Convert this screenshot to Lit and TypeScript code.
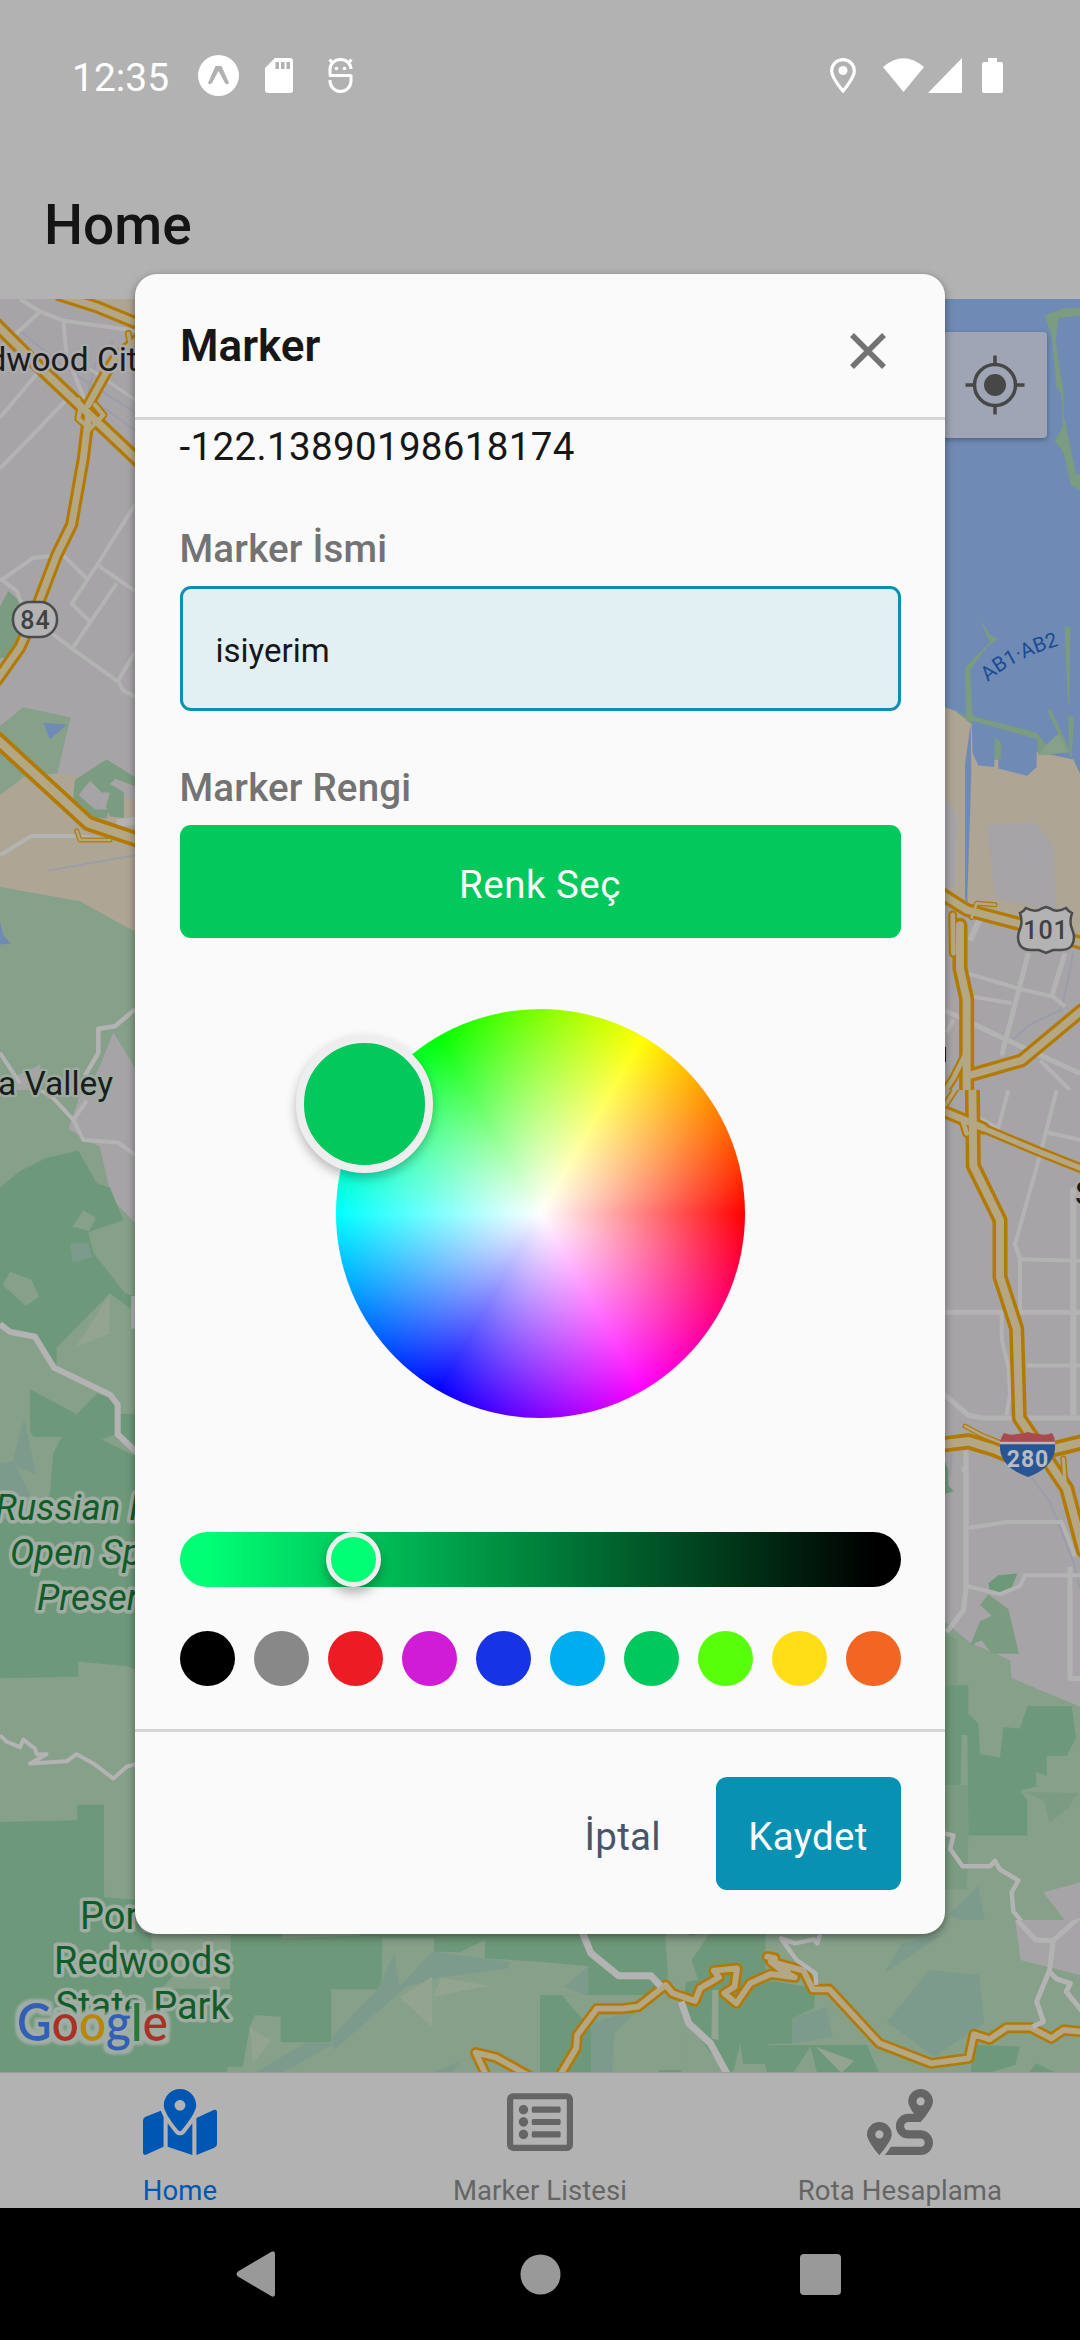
import { LitElement, html, svg, css } from "lit";
import { customElement } from "lit/decorators.js";

/* Map palette, as seen through the modal scrim. */
const C = {
  land: "#a7a4a7", park: "#86a08a", forest: "#6e987a", wood: "#7b9c80",
  sand: "#aea594", water: "#6f8bb5", teal: "#7c9b8c", pale: "#93a48f",
};

type Shape = [fill: string, points: string];
type Line = [points: string, width: number];

interface Tile {
  x: number; y: number; w: number; h: number;
  vw: number; vh: number; vy?: number;
  base: string;
  shapes: Shape[];
  creeks?: string[];
  under?: Line[];
  highways: Line[];
  over?: Line[];
}

const TILES: Tile[] = [
  {
    x: 0, y: 290, w: 140, h: 800, vw: 420, vh: 1568, base: C.land,
    shapes: [
      [C.sand, "250,18 420,18 420,75 330,35"],
      [C.wood, "0,620 25,590 60,610 70,660 30,720 0,722"],
      [C.sand, "0,985 70,955 170,945 240,955 400,1000 420,1005 420,1268 370,1250 240,1200 0,1170"],
      [C.park, "0,855 70,818 212,838 172,947 70,955 0,990"],
      [C.water, "130,848 200,852 150,881"],
      [C.land, "240,950 330,925 330,1032 290,1040 240,1010"],
      [C.wood, "225,960 320,920 405,955 405,972 345,958 330,968 372,985 372,1035 330,1032 318,1012 330,985 305,985 285,1018 326,1018 320,1036 270,1034 240,1018 220,995"],
      [C.land, "236,990 270,962 305,985 285,1018"],
      [C.park, "0,1170 240,1198 370,1245 420,1262 420,1568 0,1568"],
      [C.land, "340,1455 410,1530 420,1540 420,1568 265,1568 300,1520"],
      [C.land, "50,1540 122,1518 110,1568 40,1568"],
      [C.water, "0,1238 10,1265 32,1281 0,1283"],
    ],
    creeks: ["265,200 285,145 340,100", "60,80 190,150 405,240", "300,225 405,275", "145,1138 405,1108"],
    under: [
      ["0,115 120,42 60,18", 4], ["120,42 190,60 405,80", 4], ["190,60 200,130 270,240", 4],
      ["0,250 110,165", 4], ["0,350 200,215", 4], ["270,155 405,215", 3],
      ["0,570 100,525 190,520 260,565", 4], ["405,420 295,535 215,615 270,650", 4],
      ["295,540 405,590", 4], ["350,575 220,700", 4], ["0,565 50,590 65,615", 4],
      ["150,670 220,705 355,768 370,785 405,797", 4], ["355,765 405,710", 4],
      ["0,1108 95,1070 230,1070 330,1078", 4], ["350,1045 405,1040", 8],
      ["405,1410 345,1443 295,1448 295,1495 255,1540", 4.5], ["0,1495 60,1555", 4],
    ],
    highways: [
      ["180,10 290,33 410,65", 13], ["265,225 320,160 350,130 410,98", 12], ["385,85 395,120", 7],
      ["235,215 240,235 235,252 270,272 310,245 285,225", 8],
      ["-10,68 100,140 265,242 415,335", 14],
      ["265,250 250,330 215,460 170,520 100,640 60,700 -10,765", 13],
      ["230,1060 240,1078 330,1078", 5], ["-10,880 265,1045 410,1077", 16],
    ],
  },
  {
    x: 0, y: 1090, w: 140, h: 790, vw: 420, vh: 1457, base: C.park,
    shapes: [
      [C.land, "420,0 245,0 205,72 300,105 335,200 405,245 420,250"],
      [C.forest, "0,180 60,150 140,125 235,112 290,172 330,180 370,240 265,262 280,300 375,375 405,380 405,410 330,375 170,475 170,510 160,505 105,450 30,440 0,430"],
      [C.park, "218,252 250,222 288,235 268,260"],
      [C.teal, "210,283 265,283 277,308 218,318"],
      [C.park, "8,360 30,335 95,350 117,382 78,398"],
      [C.pale, "228,474 330,375 328,450"],
      [C.teal, "72,605 108,708 35,692"],
      [C.teal, "0,690 40,685 90,745 0,800"],
      [C.forest, "90,552 230,598 290,560 350,570 360,597 405,597 420,600 420,1072 380,1063 235,1054 235,1082 0,1085 0,790 90,800 150,745 160,670 185,640 100,640 90,630"],
      [C.park, "305,645 345,635 400,665 405,675"],
      [C.forest, "0,1350 232,1347 232,1318 312,1318 312,1568 0,1568"],
    ],
    under: [
      ["0,432 30,446 105,455 162,512 330,562 353,580 353,635 410,668", 6],
      ["110,-5 160,15 220,55 250,92 355,97 410,122", 4], ["220,55 260,20", 4], ["400,380 400,440", 4],
      ["0,1190 20,1202 60,1212 70,1198 105,1215 110,1225 140,1225 90,1242 200,1238 230,1225 280,1242 340,1270 380,1248 410,1243", 4],
    ],
    highways: [],
  },
  {
    x: 940, y: 290, w: 140, h: 800, vw: 420, vh: 1568, base: C.land,
    shapes: [
      [C.sand, "0,815 420,815 420,1290 235,1240 0,1190"],
      [C.water, "0,0 420,0 420,948 400,920 290,905 290,935 262,952 175,938 175,920 163,920 163,935 115,932 98,908 95,850 48,825 15,818 0,818"],
      [C.water, "92,850 75,930 75,1190 85,1235 82,1190 94,950"],
      [C.wood, "315,50 370,36 420,35 420,50 355,55 347,100 370,200 370,240 408,362 420,360 420,392 392,382 372,320 345,295 368,268 365,205 350,190 335,90"],
      [C.wood, "117,643 150,675 172,685 140,700 90,745 98,835 215,855 290,868 318,892 355,870 322,825 332,822 388,898 385,835 402,838 395,918 385,906 295,912 290,880 100,845 92,850 48,826 78,835 75,740 150,690"],
      [C.park, "318,892 355,870 385,906 295,912"],
      [C.wood, "374,660 391,660 388,810 384,810"],
      [C.wood, "165,875 185,890 182,920 163,920"],
      [C.land, "0,995 20,1000 55,1030 45,1170 0,1175"],
      [C.land, "140,1050 285,1042 340,1090 350,1220 165,1190"],
    ],
    creeks: ["400,1300 365,1410 270,1440 210,1475"],
    under: [
      ["85,1340 240,1370 340,1385 375,1405", 4], ["265,1300 185,1500", 5], ["375,1300 335,1385", 5],
      ["15,1412 200,1470 420,1535", 5], ["95,1385 215,1398", 4], ["20,1455 40,1430", 4],
      ["125,1225 90,1275", 6], ["300,1510 390,1568", 4],
    ],
    highways: [
      ["95,1230 110,1202 165,1205", 5], ["38,1225 40,1300", 9],
      ["-5,1180 80,1215 235,1242 425,1280", 14],
      ["-5,1590 40,1545 75,1500", 9],
      ["60,1245 60,1330 80,1390 80,1580", 15], ["95,1538 245,1510 425,1412", 14],
    ],
  },
  {
    x: 940, y: 1090, w: 140, h: 850, vw: 420, vh: 1568, base: C.land,
    shapes: [
      [C.park, "0,975 15,980 90,1020 210,1050 215,1085 410,1135 420,1138 420,1568 0,1568"],
      [C.forest, "0,1098 85,1098 85,1150 115,1168 120,1225 180,1232 190,1175 240,1178 262,1137 395,1137 408,1195 380,1228 320,1228 320,1265 287,1258 290,1285 240,1292 262,1310 262,1375 85,1375 82,1190 65,1190 62,1282 0,1282"],
      [C.land, "90,1018 130,930 215,1040 210,1052"],
      [C.wood, "145,930 205,958 237,1040 155,1040 125,1015 90,1025 120,980 155,970 120,950"],
      [C.wood, "0,1282 85,1282 85,1375 80,1475 0,1475"],
      [C.wood, "0,1005 52,1012 52,1098 0,1098"],
      [C.wood, "250,1295 412,1297 385,1325 328,1352 312,1310"],
      [C.forest, "145,910 175,895 232,892 215,918 180,930 150,925"],
      [C.forest, "0,685 15,685 25,700 25,730 42,740 15,745"],
      [C.teal, "28,1520 115,1468 145,1568"],
      [C.land, "310,1480 420,1462 420,1540 380,1536"],
    ],
    creeks: ["275,715 330,760 400,870 420,920", "35,670 30,710"],
    under: [
      ["205,0 175,70 110,50", 4], ["350,0 300,120 225,285 240,310 240,410", 4], ["240,312 420,315", 4],
      ["0,410 420,410", 5], ["320,78 420,92", 4], ["400,180 400,600", 6], ["260,508 420,508", 4],
      ["0,555 85,600 130,605 420,605", 5], ["185,415 185,460 205,510 210,560 200,600", 4],
      ["78,665 78,920 70,960 20,1000", 5], ["65,700 78,700 78,800", 5],
      ["85,808 200,797 365,797 405,860", 4], ["80,915 180,930 240,915 255,895 420,895", 4],
      ["390,880 390,1085 420,1086", 5],
      ["0,1370 40,1375 30,1400 68,1432 150,1432 165,1422 180,1438 235,1458 215,1480 220,1515 290,1568 350,1568 420,1530", 4.5],
    ],
    highways: [
      ["75,620 130,638 180,650", 5], ["370,680 375,720", 6],
      ["-5,35 130,70", 13], ["120,68 290,112 425,145", 10], ["15,28 45,0", 7], ["70,60 80,80", 9],
      ["-5,655 85,648 160,662 200,672", 16], ["330,664 425,650", 16],
      ["97,-10 100,140 180,240 180,345 230,440 238,605 380,735 430,850", 15],
    ],
  },
  {
    x: 0, y: 1880, w: 540, h: 193, vw: 1568, vh: 579, base: C.forest,
    shapes: [
      [C.park, "302,0 400,0 400,60 302,52"],
      [C.park, "440,160 670,165 668,328 470,325 500,290 440,200"],
      [C.park, "815,150 1045,150 1045,167 820,175"],
      [C.park, "1110,175 1260,175 1260,215 1335,217 1408,180 1408,235 1568,245 1568,579 660,579 660,560 705,560 725,440 740,405 815,410 815,487 962,487 962,328 1108,328"],
      [C.teal, "1145,220 1160,320 1255,215 1480,245 1475,265 1290,290 1180,320 970,510 962,470 1095,330"],
      [C.teal, "885,490 970,490 820,579 740,579"],
      [C.pale, "1160,352 1255,290 1255,440"],
      [C.pale, "1280,292 1420,317 1260,350"],
      [C.pale, "725,440 788,483 735,548"],
      [C.teal, "1265,575 1340,540 1310,579"],
    ],
    highways: [["1416,595 1381,518 1440,532 1540,590", 11]],
  },
  {
    x: 540, y: 1920, w: 540, h: 153, vw: 1568, vh: 459, vy: -60, base: C.park,
    shapes: [
      [C.forest, "0,-60 360,-60 372,110 340,165 0,168"],
      [C.park, "0,65 140,78 140,168 0,165"],
      [C.teal, "140,80 140,168 70,140"],
      [C.forest, "0,165 65,167 150,270 150,399 0,399"],
      [C.park, "120,165 345,165 410,200 410,399 150,399 150,270"],
      [C.teal, "150,250 290,205 215,280 210,399 150,399"],
      [C.forest, "440,30 540,-60 655,-60 655,120 800,145 795,205 733,235 733,310 660,313 660,372 590,372 582,310 560,399 540,399 410,220"],
      [C.forest, "420,-60 545,-60 545,0 440,20"],
      [C.park, "375,10 500,-30 440,60 460,120 400,130"],
      [C.pale, "500,150 518,150 518,300 498,296"],
      [C.forest, "345,390 410,390 410,399 345,399"],
      [C.forest, "640,315 950,315 985,399 660,399"],
      [C.park, "735,399 785,320 805,399"], [C.pale, "800,320 912,362 875,399"],
      [C.teal, "735,235 830,200 850,290 733,312"],
      [C.teal, "1130,90 1275,105 1290,250 1145,350 1008,245"],
      [C.teal, "1000,100 1050,10 1165,-15"],
      [C.forest, "1260,315 1393,320 1380,375 1300,399 1250,399"],
      [C.forest, "1440,370 1500,399 1420,399"],
      [C.land, "1380,-60 1568,-60 1568,105 1395,60"],
    ],
    highways: [
      ["660,50 682,54 682,72 720,92", 11],
      ["50,420 105,325 108,285 165,206 240,206 285,200 365,135 385,160 450,183 465,145 520,112 505,92 572,85 565,140 535,160 570,190 610,130 670,102 740,112 700,90 670,65 765,92 792,148 840,148 985,310 1135,370 1245,355 1260,283 1305,298 1355,263 1425,263 1485,295 1520,270 1575,275", 11],
    ],
    over: [
      ["108,-60 148,40 228,107 322,107 350,138", 7], ["410,185 432,250 495,310 545,405", 7],
      ["820,-40 805,10 795,-2 740,10 700,-5 745,60 800,100 802,135", 4.5],
      ["1385,-60 1440,0 1490,2 1568,-70", 5], ["1490,2 1480,90 1442,185 1462,245 1430,260", 5],
      ["1480,95 1500,117 1540,130 1528,155 1575,215", 5],
    ],
  },
];

const road = ([p, w]: Line) => svg`<polyline class="road" points=${p} stroke-width=${w}/>`;

const tile = (t: Tile) => svg`
  <svg x=${t.x} y=${t.y} width=${t.w} height=${t.h} viewBox="0 ${t.vy ?? 0} ${t.vw} ${t.vh}" preserveAspectRatio="none">
    <rect y=${t.vy ?? 0} width=${t.vw} height=${t.vh} fill=${t.base}/>
    ${t.shapes.map(([f, p]) => svg`<polygon fill=${f} points=${p}/>`)}
    ${(t.creeks ?? []).map((p) => svg`<polyline class="creek" points=${p}/>`)}
    ${(t.under ?? []).map(road)}
    ${t.highways.map(([p, w]) => svg`<polyline class="casing" points=${p} stroke-width=${w}/>`)}
    ${t.highways.map(([p, w]) => svg`<polyline class="lane" points=${p} stroke-width=${w * 0.53}/>`)}
    ${(t.over ?? []).map(road)}
  </svg>`;

@customElement("map-view")
class MapView extends LitElement {
  static styles = css`
    :host { display: block; position: relative; overflow: hidden; }
    .map { display: block; width: 1080px; height: 1773px; font-family: Roboto, "Liberation Sans", sans-serif; }
    polyline { fill: none; vector-effect: non-scaling-stroke; stroke-linejoin: round; }
    .road { stroke: #b4b3b4; }
    .creek { stroke: #9b9daa; stroke-width: 2px; }
    .casing { stroke: #b27a00; stroke-linecap: round; }
    .lane { stroke: #b3a785; stroke-linecap: round; }
    .town { font-size: 33.5px; fill: #1a1c1d; stroke: #acaaac; stroke-width: 5px; paint-order: stroke; stroke-linejoin: round; }
    .town.woods { stroke: #9dab9f; }
    .nature { fill: #125c2a; stroke: #a0ada3; stroke-width: 7px; paint-order: stroke; stroke-linejoin: round; }
    .preserve { font-size: 36.5px; font-style: italic; }
    .statepark { font-size: 38px; }
    .shield-no { font-size: 25px; font-weight: 500; fill: #3f4142; text-anchor: middle; letter-spacing: 1px; }
    .shield-no.inter { fill: #b8bcc4; font-weight: 700; font-size: 23px; }
    .water-label { font-size: 20.5px; fill: #1c4a92; }
    .logo { font-family: Lato, Roboto, sans-serif; font-weight: 600; font-size: 51px; }
    .b { fill: #3060b3; } .r { fill: #a93026; } .y { fill: #b58a02; } .g { fill: #25793a; }
    .locate {
      position: absolute; right: 33px; top: 33px; width: 105px; height: 106px; border-radius: 4px;
      background: #9fa5b4; display: grid; place-items: center; box-shadow: 0 2px 5px rgba(0, 0, 0, .3);
    }
  `;
  render() {
    return html`
      <svg class="map" viewBox="0 299 1080 1773">
        <defs>
          <filter id="halo" x="-10%" y="-20%" width="120%" height="140%">
            <feMorphology in="SourceAlpha" operator="dilate" radius="4" result="fat"/>
            <feGaussianBlur in="fat" stdDeviation="1.200" result="soft"/>
            <feFlood flood-color="#9fada4"/>
            <feComposite in2="soft" operator="in" result="ring"/>
            <feMerge><feMergeNode in="ring"/><feMergeNode in="SourceGraphic"/></feMerge>
          </filter>
        </defs>
        ${TILES.map(tile)}
        <text class="town" x="-51" y="371">Redwood City</text>
        <rect x="13" y="602" width="44" height="35" rx="17" fill="#b3b3b3" stroke="#4a4c4d" stroke-width="2.5"/>
        <text class="shield-no" x="35.500" y="629">84</text>
        <text class="town woods" x="113" y="1095" text-anchor="end">Portola Valley</text>
        <text class="nature preserve" x="-5" y="1520">Russian Ridge</text>
        <text class="nature preserve" x="10" y="1565">Open Space</text>
        <text class="nature preserve" x="37" y="1610">Preserve</text>
        <text class="nature statepark" x="80" y="1929">Portola</text>
        <text class="nature statepark" x="54" y="1974">Redwoods</text>
        <text class="nature statepark" x="55.500" y="2018.500">State Park</text>
        <text class="logo" filter="url(#halo)" x="17" y="2041" textLength="151" lengthAdjust="spacingAndGlyphs"><tspan class="b">G</tspan><tspan class="r">o</tspan><tspan class="y">o</tspan><tspan class="b">g</tspan><tspan class="g">l</tspan><tspan class="r">e</tspan></text>
        <path id="bridge" d="M988 682Q1012 659 1064 644" fill="none"/>
        <text class="water-label"><textPath href="#bridge">AB1·AB2</textPath></text>
        <path d="M1020 913q4-2 6-5q7 4 13 2q3-2 7-3q4 1 7 3q6 2 13-2q2 3 6 5q-3 9 0 16q4 9 0 16q-3 5-11 5h-8l-7 3l-7-3h-8q-8 0-11-5q-4-7 0-16q3-7 0-16z" fill="#b3b3b3" stroke="#4a4c4d" stroke-width="2.500"/>
        <text class="shield-no" x="1046" y="939">101</text>
        <rect x="940" y="1047" width="6" height="15" fill="#1a1c1d"/>
        <text class="town" x="1075" y="1205">Sunnyvale</text>
        <path d="M1000 1444h55v5q-2 19-27 28q-26-9-28-28z" fill="#2a5593"/>
        <path d="M1004 1433q7 3 13 1q6 0 11-2q6 2 11 2q7 2 13-1q3 4 3 9h-55q1-5 4-9z" fill="#a84b50"/>
        <path d="M1000 1443h55" stroke="#b8b8bd" stroke-width="2.500"/>
        <text class="shield-no inter" x="1028" y="1466.500">280</text>
      </svg>
      <div class="locate">
        <svg width="62" height="62" viewBox="-31 -31 62 62" fill="none" stroke="#474747" stroke-width="3.500">
          <circle r="20.500"/><circle r="11" fill="#474747" stroke="none"/>
          <path d="M0-29.500V-21M0 29.500V21M-29.500 0H-21M29.500 0H21"/>
        </svg>
      </div>`;
  }
}

const SWATCHES = ["#000000", "#888888", "#ed1c24", "#d11cd5", "#1633e6", "#00aeef", "#00c85d", "#57ff0a", "#ffde17", "#f26522"];

@customElement("marker-dialog")
class MarkerDialog extends LitElement {
  static styles = css`
    :host {
      display: flex; flex-direction: column; width: 810px; height: 1660px; box-sizing: border-box;
      background: #fafafa; border-radius: 22px; overflow: hidden; color: #171717;
      font-size: 38.5px; box-shadow: 0 3px 9px rgba(0, 0, 0, .42);
    }
    .head { display: flex; justify-content: space-between; height: 143px; align-items: center; padding: 0 58px 0 45px; border-bottom: 3px solid #d6d6d6; }
    .title { font-size: 44px; font-weight: 600; line-height: 60px; }
    .close { display: block; margin-top: 11px; }
    .body { display: flex; flex-direction: column; height: 1309px; padding: 2px 44.5px 0; box-sizing: border-box; }
    .coord { line-height: 50px; letter-spacing: .35px; }
    .label { line-height: 40px; font-weight: 500; color: #737373; margin-top: 57px; letter-spacing: .2px; }
    .input { margin-top: 17px; height: 125px; box-sizing: border-box; border: 3px solid #0891b2; border-radius: 11px; background: #e2eff3; display: flex; align-items: center; padding: 4px 33px 0; font-size: 33px; }
    .pick { margin-top: 17px; height: 113px; box-sizing: border-box; padding-top: 5px; border-radius: 11px; background: #03c85b; color: #fafafa; display: flex; align-items: center; justify-content: center; letter-spacing: .5px; }
    .wheel {
      position: relative; align-self: center; flex: none; margin-top: 71px; width: 409px; height: 409px; border-radius: 50%;
      background: radial-gradient(closest-side, #fff, rgba(255, 255, 255, 0)),
        conic-gradient(from 90deg, #f00, #f0f, #00f, #0ff, #0f0, #ff0, #f00);
    }
    .wheel-thumb { position: absolute; left: -40px; top: 26px; width: 137.5px; height: 137.5px; box-sizing: border-box; border-radius: 50%; border: 8px solid #eee; background: #03c85b; box-shadow: 0 5px 11px rgba(0, 0, 0, .27); }
    .slider { position: relative; flex: none; margin-top: 114px; height: 55px; border-radius: 27.5px; background: linear-gradient(90deg, #00ff75 27px, #000 calc(100% - 27px)); }
    .slider-thumb { position: absolute; left: 146px; top: 0; width: 55px; height: 55px; box-sizing: border-box; border: 5px solid #eee; border-radius: 50%; background: #00ff75; box-shadow: 0 6px 11px rgba(0, 0, 0, .3); }
    .swatches { display: flex; justify-content: space-between; margin-top: 43.5px; }
    .swatch { width: 55px; height: 55px; border-radius: 50%; }
    .rule { height: 3px; background: #d6d6d6; flex: none; }
    .foot { display: flex; justify-content: flex-end; height: 202px; box-sizing: border-box; padding: 45px 44.5px 44px; }
    .btn { display: flex; align-items: center; justify-content: center; padding-top: 5px; box-sizing: border-box; height: 113px; border-radius: 11px; letter-spacing: .3px; }
    .cancel { color: #475569; margin-right: 54.5px; }
    .save { width: 185px; background: #0891b2; color: #fafafa; }
  `;
  render() {
    return html`
      <div class="head">
        <div class="title">Marker</div>
        <svg class="close" width="38" height="38" viewBox="-19 -19 38 38"><path d="M-16-16L16 16M16-16L-16 16" stroke="#737373" stroke-width="5.500"/></svg>
      </div>
      <div class="body">
        <div class="coord">-122.13890198618174</div>
        <div class="label">Marker İsmi</div>
        <div class="input">isiyerim</div>
        <div class="label">Marker Rengi</div>
        <div class="pick">Renk Seç</div>
        <div class="wheel"><div class="wheel-thumb"></div></div>
        <div class="slider"><div class="slider-thumb"></div></div>
        <div class="swatches">${SWATCHES.map((c) => html`<div class="swatch" style="background:${c}"></div>`)}</div>
      </div>
      <div class="rule"></div>
      <div class="foot">
        <div class="btn cancel">İptal</div>
        <div class="btn save">Kaydet</div>
      </div>`;
  }
}

const TABS = [
  {
    label: "Home", active: true, width: 74, box: "0 0 576 512",
    d: "M288 0c-69.590 0-126 56.410-126 126 0 56.260 82.350 158.800 113.900 196.020 6.390 7.540 17.820 7.540 24.200 0C331.650 284.800 414 182.260 414 126 414 56.410 357.590 0 288 0zm0 168c-23.200 0-42-18.800-42-42s18.800-42 42-42 42 18.800 42 42-18.800 42-42 42zM20.120 215.950A32.006 32.006 0 0 0 0 245.660v250.320c0 11.320 11.430 19.060 21.940 14.860L160 448V214.920c-8.840-15.980-16.070-31.540-21.250-46.420L20.120 215.950zM288 359.670c-14.070 0-27.380-6.180-36.510-16.960-19.660-23.200-40.570-49.620-59.490-76.720v182l192 64V266c-18.920 27.090-39.820 53.520-59.490 76.720-9.130 10.770-22.440 16.950-36.510 16.950zm266.060-198.510L416 224v288l139.880-55.950A31.996 31.996 0 0 0 576 426.340V176.020c0-11.320-11.430-19.060-21.940-14.860z",
  },
  {
    label: "Marker Listesi", active: false, width: 66, box: "0 0 512 512",
    d: "M464 32H48C21.490 32 0 53.490 0 80v352c0 26.510 21.490 48 48 48h416c26.510 0 48-21.490 48-48V80c0-26.510-21.490-48-48-48zm-6 400H54a6 6 0 0 1-6-6V86a6 6 0 0 1 6-6h404a6 6 0 0 1 6 6v340a6 6 0 0 1-6 6zm-42-92v24c0 6.627-5.373 12-12 12H204c-6.627 0-12-5.373-12-12v-24c0-6.627 5.373-12 12-12h200c6.627 0 12 5.373 12 12zm0-96v24c0 6.627-5.373 12-12 12H204c-6.627 0-12-5.373-12-12v-24c0-6.627 5.373-12 12-12h200c6.627 0 12 5.373 12 12zm0-96v24c0 6.627-5.373 12-12 12H204c-6.627 0-12-5.373-12-12v-24c0-6.627 5.373-12 12-12h200c6.627 0 12 5.373 12 12zm-252 12c0 19.882-16.118 36-36 36s-36-16.118-36-36 16.118-36 36-36 36 16.118 36 36zm0 96c0 19.882-16.118 36-36 36s-36-16.118-36-36 16.118-36 36-36 36 16.118 36 36zm0 96c0 19.882-16.118 36-36 36s-36-16.118-36-36 16.118-36 36-36 36 16.118 36 36z",
  },
  {
    label: "Rota Hesaplama", active: false, width: 66, box: "0 0 512 512",
    d: "M416 320h-96c-17.600 0-32-14.400-32-32s14.400-32 32-32h96s96-107 96-160-43-96-96-96-96 43-96 96c0 25.500 22.200 63.400 45.300 96H320c-52.900 0-96 43.100-96 96s43.100 96 96 96h96c17.600 0 32 14.400 32 32s-14.400 32-32 32H185.500c-16 24.800-33.800 47.700-47.300 64H416c52.900 0 96-43.100 96-96s-43.100-96-96-96zm0-256c17.700 0 32 14.300 32 32s-14.300 32-32 32-32-14.300-32-32 14.300-32 32-32zM96 256c-53 0-96 43-96 96s96 160 96 160 96-107 96-160-43-96-96-96zm0 128c-17.700 0-32-14.300-32-32s14.300-32 32-32 32 14.300 32 32-14.300 32-32 32z",
  },
];

@customElement("app-root")
class AppRoot extends LitElement {
  static styles = css`
    :host {
      display: flex; flex-direction: column; position: relative; width: 1080px; height: 2340px; overflow: hidden;
      background: #b2b2b2; font-family: Roboto, "Liberation Sans", sans-serif;
    }
    .status { display: flex; align-items: center; height: 151px; padding: 0 77px 0 72px; box-sizing: border-box; color: #fff; }
    .status svg { display: block; fill: #fff; }
    .time { font-size: 39px; line-height: 48px; padding-top: 4px; width: 126px; }
    .notif { display: flex; align-items: center; flex: 1; }
    .sd { margin: 0 35px 0 26px; }
    .system { display: flex; align-items: center; }
    .sys-pin { margin-right: 27px; }
    .sys-wifi { margin-right: 4px; }
    .sys-signal { margin-right: 20px; }
    .title { height: 148px; padding: 42px 0 0 44px; box-sizing: border-box; font-size: 55px; line-height: 64px; font-weight: 500; color: #141414; }
    .tabs { display: grid; grid-template-columns: repeat(3, 360px); height: 136px; box-sizing: border-box; border-top: 1px solid #9b9b9b; }
    .tab { display: flex; flex-direction: column; align-items: center; padding-top: 16px; color: #656565; font-size: 27.5px; letter-spacing: .1px; }
    .tab.active { color: #0057b3; }
    .tab svg { display: block; fill: currentColor; }
    .tab-label { line-height: 32px; margin-top: 20px; }
    .nav { height: 132px; box-sizing: border-box; padding-left: 236px; background: #000; display: flex; align-items: center; }
    .nav svg { display: block; fill: #999; }
    .nav-home { margin: 0 239.5px 0 243.5px; }
    .overlay { position: absolute; inset: 0; display: flex; justify-content: center; align-items: flex-start; padding-top: 274px; }
  `;
  render() {
    return html`
      <div class="status">
        <div class="time">12:35</div>
        <div class="notif">
          <svg width="41" height="41" viewBox="0 0 41 41">
            <circle cx="20.500" cy="20.500" r="20.500"/>
            <path d="M17.500 11h6l7.500 17q-2 2.500-4 0l-6.500-12-6.500 12q-2 2.500-4 0z" fill="#b2b2b2"/>
          </svg>
          <svg class="sd" width="28" height="35" viewBox="0 0 28 35">
            <path d="M10 0h15q3 0 3 3v29q0 3-3 3H3q-3 0-3-3V10z"/>
            <path d="M10.500 4h3.500v7h-3.500zM16 4h3.500v7H16zM21.500 4H25v7h-3.500z" fill="#b2b2b2"/>
          </svg>
          <svg width="25" height="36" viewBox="0 0 25 36">
            <path d="M2 17.500V11a10.500 9.500 0 0 1 21 0M1 17.500h22.500M23 17v6a10.500 10.500 0 0 1-21 0v-1M4.500 5L1.500 1.500M20.500 5l3-3.500" fill="none" stroke="#fff" stroke-width="3"/>
            <circle cx="8.500" cy="10.500" r="1.800"/><circle cx="16.500" cy="10.500" r="1.800"/>
          </svg>
        </div>
        <div class="system">
          <svg class="sys-pin" width="26" height="35" viewBox="0 0 26 35">
            <path d="M13 1.700c-6.300 0-11.300 5-11.300 11.300 0 7 11.300 20 11.300 20s11.300-13 11.300-20c0-6.300-5-11.300-11.300-11.300z" fill="none" stroke="#fff" stroke-width="3.200"/>
            <circle cx="13" cy="12.500" r="4.500"/>
          </svg>
          <svg class="sys-wifi" width="41" height="35" viewBox="0 0 41 35"><path d="M0 9Q20.500-8.500 41 9L20.500 34z"/></svg>
          <svg class="sys-signal" width="34" height="35" viewBox="0 0 34 35"><path d="M34 0v35H0z"/></svg>
          <svg width="21" height="37" viewBox="0 0 21 37"><path d="M6 1h9v4h4q2 0 2 2v27q0 2-2 2H2q-2 0-2-2V7q0-2 2-2h4z"/></svg>
        </div>
      </div>
      <div class="title">Home</div>
      <map-view></map-view>
      <div class="tabs">
        ${TABS.map((t) => html`
          <div class="tab ${t.active ? "active" : ""}">
            <svg width=${t.width} height="66" viewBox=${t.box}><path d=${t.d}/></svg>
            <div class="tab-label">${t.label}</div>
          </div>`)}
      </div>
      <div class="nav">
        <svg width="40" height="46" viewBox="0 0 40 46"><path d="M35 1Q39-1 39 3v40q0 4-4 2L2 25.500Q-1 23 2 20.500z"/></svg>
        <svg class="nav-home" width="41" height="41" viewBox="0 0 41 41"><circle cx="20.500" cy="20.500" r="20"/></svg>
        <svg width="41" height="41" viewBox="0 0 41 41"><rect width="41" height="41" rx="4"/></svg>
      </div>
      <div class="overlay"><marker-dialog></marker-dialog></div>`;
  }
}
